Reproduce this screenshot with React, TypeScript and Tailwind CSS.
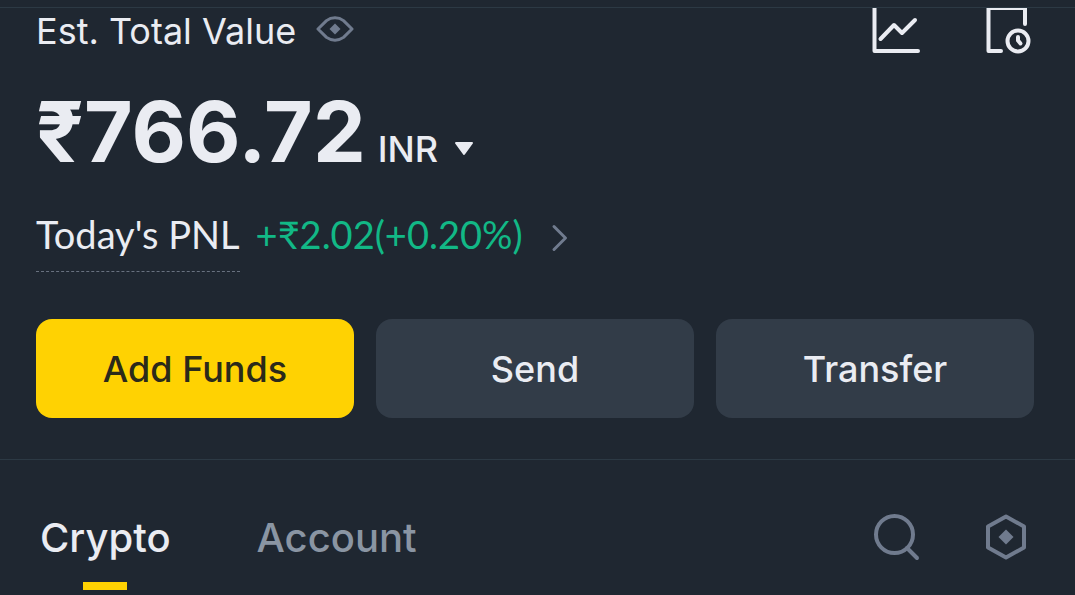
import { useState } from "react";
import clsx from "clsx";

const ACTIONS = [
  { label: "Add Funds", primary: true },
  { label: "Send", primary: false },
  { label: "Transfer", primary: false },
];

const TABS = ["Crypto", "Account"];

function EyeIcon() {
  return (
    <svg width="38" height="26" viewBox="0 0 38 26" fill="none">
      <path
        d="M2 13 L10.5 4.6 C15.5 0.9 22.5 0.9 27.5 4.6 L36 13 L27.5 21.4 C22.5 25.1 15.5 25.1 10.5 21.4 Z"
        stroke="currentColor"
        strokeWidth="3"
        strokeLinejoin="round"
      />
      <path d="M19 7.5 L24.5 13 L19 18.5 L13.5 13 Z" fill="currentColor" />
    </svg>
  );
}

function ChartIcon() {
  return (
    <svg width="48" height="46" viewBox="0 0 48 46" fill="none" stroke="currentColor" strokeWidth="4" strokeLinecap="round" strokeLinejoin="round">
      <path d="M2.5 -2 V43 H46" />
      <path d="M8.5 31 L22 17 L30 25 L43 12" />
    </svg>
  );
}

function HistoryIcon() {
  return (
    <svg width="46" height="46" viewBox="0 0 46 46" fill="none" stroke="currentColor" strokeWidth="4" strokeLinecap="round" strokeLinejoin="round">
      <path d="M15 43 H2.5 V0 H39 V16" />
      <circle cx="32" cy="33" r="10.5" />
      <path d="M32 29 V32.5 L34.5 35.5" />
    </svg>
  );
}

function SearchIcon() {
  return (
    <svg width="48" height="48" viewBox="0 0 48 48" fill="none" stroke="currentColor" strokeWidth="4">
      <circle cx="21.5" cy="20.5" r="18.5" />
      <path d="M34 34 L44 44" strokeLinecap="round" />
    </svg>
  );
}

function HexIcon() {
  return (
    <svg width="42" height="48" viewBox="0 0 42 48" fill="none">
      <path d="M21 2.5 L39 12.5 V33.5 L21 43.5 L3 33.5 V12.5 Z" stroke="currentColor" strokeWidth="4" strokeLinejoin="round" />
      <path d="M21 15.5 L28.5 23 L21 30.5 L13.5 23 Z" fill="currentColor" />
    </svg>
  );
}

export default function App() {
  const [hidden, setHidden] = useState(false);
  const [tab, setTab] = useState("Crypto");

  return (
    <div className="min-h-screen bg-[#1f2731] font-['Inter','Liberation_Sans',sans-serif] text-[#eaecf2]">
      <div className="h-2 border-b border-[#2c3944]" />

      <main className="pl-9 pr-[41px]">
        {/* Balance heading */}
        <div className="flex items-start justify-between">
          <div className="flex items-start gap-5">
            <h1 className="text-[36px] leading-[46px]">Est. Total Value</h1>
            <button
              type="button"
              aria-label="Toggle balance"
              onClick={() => setHidden(!hidden)}
              className="cursor-pointer pt-2 text-[#707b8e]"
            >
              <EyeIcon />
            </button>
          </div>
          <div className="flex gap-[66px] pr-0.5">
            <button type="button" aria-label="Analysis" className="cursor-pointer">
              <ChartIcon />
            </button>
            <button type="button" aria-label="History" className="cursor-pointer">
              <HistoryIcon />
            </button>
          </div>
        </div>

        <div className="mt-9 flex items-baseline gap-3">
          <span className="text-[84px] font-bold leading-[84px]">{hidden ? "******" : "₹766.72"}</span>
          <button type="button" className="flex cursor-pointer items-center gap-4 text-[36px] font-medium leading-[44px]">
            INR
            <svg width="20" height="14" viewBox="0 0 20 14">
              <path d="M2 1 H18 L10 12 Z" fill="currentColor" stroke="currentColor" strokeWidth="2" strokeLinejoin="round" />
            </svg>
          </button>
        </div>

        {/* Daily PNL */}
        <div className="mt-[38px] flex items-start gap-4 font-['Lato','Liberation_Sans',sans-serif] text-[38px] leading-[44px]">
          <span className="border-b border-dashed border-[#68717f] pb-[15px]">Today&apos;s PNL</span>
          <a href="#pnl" className="flex items-center gap-7 text-[#12b886]">
            {hidden ? "******" : "+₹2.02(+0.20%)"}
            <svg width="18" height="28" viewBox="0 0 18 28" fill="none" className="mt-2 text-[#707b8e]">
              <path d="M3 2.5 L14.5 14 L3 25.5" stroke="currentColor" strokeWidth="3" strokeLinecap="round" strokeLinejoin="round" />
            </svg>
          </a>
        </div>

        <div className="mt-[47px] grid grid-cols-3 gap-[22px]">
          {ACTIONS.map((action) => (
            <button
              key={action.label}
              type="button"
              className={clsx(
                "h-[99px] cursor-pointer rounded-2xl text-[36px] font-medium",
                action.primary ? "bg-[#ffd202] text-[#2b2a1a]" : "bg-[#323c48]"
              )}
            >
              {action.label}
            </button>
          ))}
        </div>
      </main>

      {/* Asset tabs */}
      <div className="mt-[41px] flex items-start justify-between border-t border-[#2c3944] pl-10 pr-12 pt-[54px]">
        <div className="flex gap-[86px]" role="tablist">
          {TABS.map((name) => (
            <button
              key={name}
              type="button"
              role="tab"
              aria-selected={tab === name}
              onClick={() => setTab(name)}
              className={clsx(
                "flex cursor-pointer flex-col items-center gap-5 text-[40px] font-medium leading-[48px]",
                tab !== name && "text-[#8a95a3]"
              )}
            >
              {name}
              {tab === name && <span className="h-2 w-11 bg-[#ffd202]" />}
            </button>
          ))}
        </div>
        <div className="flex gap-16 text-[#707b8e]">
          <button type="button" aria-label="Search" className="cursor-pointer">
            <SearchIcon />
          </button>
          <button type="button" aria-label="Asset settings" className="cursor-pointer">
            <HexIcon />
          </button>
        </div>
      </div>
    </div>
  );
}
